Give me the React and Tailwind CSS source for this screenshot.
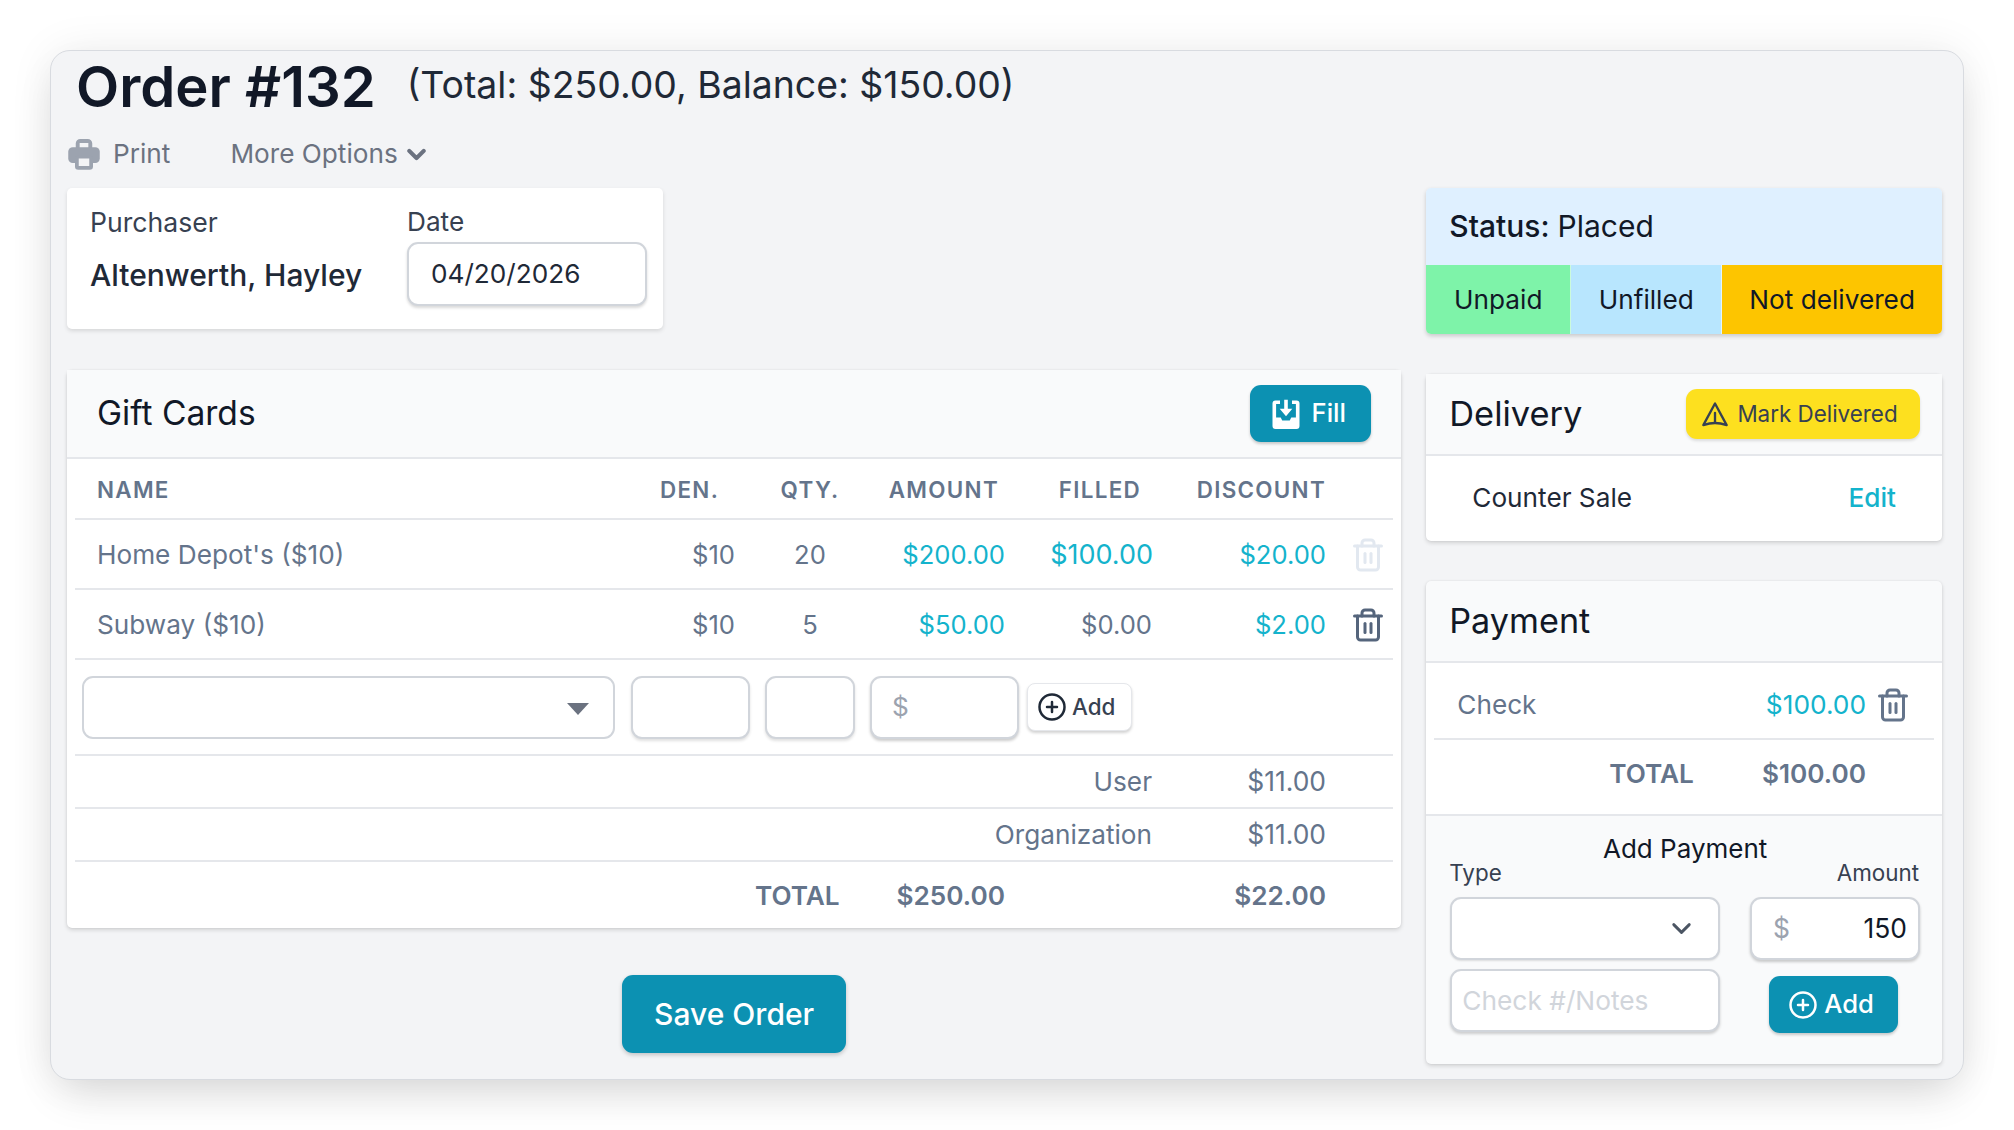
import React from 'react';
import { ChevronDown, CirclePlus, Trash2 } from 'lucide-react';

const PrinterIcon = ({ className }) => (
  <svg viewBox="0 0 24 24" className={className}>
    <path fill="#9ca3af" d="M6.500 9V5a3 3 0 0 1 3-3h5a3 3 0 0 1 3 3v4h-2.600V4.600H9.100V9z" />
    <rect fill="#9ca3af" x="1.500" y="7.500" width="21" height="10.500" rx="3" />
    <rect fill="#9ca3af" x="6" y="13" width="12" height="9.500" rx="2.200" />
    <rect fill="#f3f4f6" x="8.500" y="15" width="7" height="5" />
  </svg>
);

const FillIcon = ({ className }) => (
  <svg viewBox="0 0 24 24" className={className} fill="currentColor">
    <path d="M8 3H5a2 2 0 0 0-2 2v15a2 2 0 0 0 2 2h14a2 2 0 0 0 2-2V5a2 2 0 0 0-2-2h-3v2.400h2.600v9H15.500l-1 2h-5l-1-2H5.400v-9H8z" />
    <path d="M10.800 2.500h2.400v6h3l-4.200 5-4.200-5h3z" />
  </svg>
);

const WarnIcon = ({ className }) => (
  <svg viewBox="0 0 24 24" className={className} fill="none" stroke="currentColor" strokeWidth="2" strokeLinejoin="round" strokeLinecap="round">
    <path d="M12 3 2 21.500c3-1 6-1.800 10-1.800s7 .8 10 1.800z" />
    <path d="M12 11v8" />
  </svg>
);

const Field = ({ className = '', children }) => (
  <div className={`flex items-center rounded-[11px] border-2 border-[#d1d5db] bg-white ${className}`}>
    {children}
  </div>
);

const AddCircle = ({ className }) => <CirclePlus className={className} strokeWidth={2} />;

const rowBorder = 'border-b-2 border-[#e5e7eb]';
const teal = 'text-[#14b3cc]';
const num = 'text-[25.6px]';

const App = () => {
  return (
    <div className="min-h-screen bg-white p-[50px] font-['Inter',sans-serif]">
      <div className="h-[1030px] rounded-[20px] border border-[#d8dbe0] bg-[#f3f4f6] pl-4 pr-[21px] shadow-[0_20px_45px_-10px_rgba(0,0,0,0.14),0_0_45px_rgba(0,0,0,0.07)]">
        <div className="flex h-[62px] items-center pl-[9px] pt-[10px]">
          <h1 className="text-[56.200px] font-semibold leading-none text-[#111827]">Order #132</h1>
          <span className="ml-[31px] pb-[5px] text-[37.4px] leading-none text-[#1f2937]">(Total: $250.00, Balance: $150.00)</span>
        </div>

        <div className="mt-[12px] flex h-[58px] items-center text-[26.2px] text-[#6b7280]">
          <PrinterIcon className="-ml-[1px] h-[36px] w-[36px]" />
          <span className="ml-[11px]">Print</span>
          <span className="ml-[60px]">More Options</span>
          <ChevronDown className="ml-[4px] h-[29px] w-[29px]" strokeWidth={3.5} />
        </div>

        <div className="mt-[5px] flex gap-[25px]">
          {/* left column */}
          <div className="w-[1335px]">
            <div className="flex h-[141px] w-[596px] rounded-[5px] bg-white pl-[23px] pt-[18px] shadow-[0_2px_4px_rgba(0,0,0,0.12)]">
              <div className="w-[317px]">
                <div className="text-[26.6px] leading-[32px] text-[#374151]">Purchaser</div>
                <div className="mt-[18px] text-[30px] font-[450] leading-[38px] text-[#1f2937]">Altenwerth, Hayley</div>
              </div>
              <div>
                <div className="text-[26.2px] leading-[32px] text-[#374151]">Date</div>
                <div className="mt-[4px] flex h-[64px] w-[240px] items-center rounded-[11px] border-2 border-[#d1d5db] bg-white pl-[22px] text-[26.2px] text-[#1f2937] shadow-[0_2px_3px_rgba(0,0,0,0.15)]">
                  04/20/2026
                </div>
              </div>
            </div>

            <div className="mt-[41px] h-[558px] rounded-[5px] bg-white shadow-[0_2px_4px_rgba(0,0,0,0.14),0_0_2px_rgba(0,0,0,0.08)]">
              <div className="flex h-[89px] items-center justify-between border-b-2 border-[#e5e7eb] bg-[#f9fafb] pl-[30px] pr-[30px]">
                <h2 className="text-[33.6px] text-[#111827]">Gift Cards</h2>
                <button className="flex h-[57px] w-[121px] items-center justify-center gap-[8px] rounded-[11px] bg-[#0c91b2] pr-[8px] text-[25.6px] font-medium text-white shadow-[0_2px_3px_rgba(0,0,0,0.2)]">
                  <FillIcon className="h-[36px] w-[36px]" />
                  Fill
                </button>
              </div>

              <div className="px-2">
                <table className="w-full table-fixed border-collapse text-[26.2px] text-[#64748b]">
                  <colgroup>
                    <col className="w-[565px]" />
                    <col className="w-[115px]" />
                    <col className="w-[110px]" />
                    <col className="w-[155px]" />
                    <col className="w-[150px]" />
                    <col className="w-[171px]" />
                    <col />
                  </colgroup>
                  <thead>
                    <tr className={`h-[60px] ${rowBorder} text-[22.4px] tracking-[1.3px] [&>th]:pt-[2px]`}>
                      <th className="pl-[22px] text-left font-semibold">NAME</th>
                      <th className="pl-[20px] text-left font-semibold">DEN.</th>
                      <th className="text-center font-semibold">QTY.</th>
                      <th className="pr-[21px] text-right font-semibold">AMOUNT</th>
                      <th className="pr-[29px] text-right font-semibold">FILLED</th>
                      <th className="pr-[15px] text-right font-semibold">DISCOUNT</th>
                      <th />
                    </tr>
                  </thead>
                  <tbody>
                    <tr className={`h-[70px] ${rowBorder} [&>td]:pt-[2px]`}>
                      <td className="pl-[22px]">Home Depot's ($10)</td>
                      <td className={`pr-[20px] text-right ${num}`}>$10</td>
                      <td className={`text-center ${num}`}>20</td>
                      <td className={`pr-[15px] text-right ${num} ${teal}`}>$200.00</td>
                      <td className={`pr-[17px] text-right text-[27px] ${teal}`}>$100.00</td>
                      <td className={`pr-[15px] text-right ${num} ${teal}`}>$20.00</td>
                      <td className="pl-[2px]"><Trash2 className="mx-auto h-[36px] w-[36px] text-[#e2e8f0]" strokeWidth={2} /></td>
                    </tr>
                    <tr className={`h-[70px] ${rowBorder} [&>td]:pt-[2px]`}>
                      <td className="pl-[22px]">Subway ($10)</td>
                      <td className={`pr-[20px] text-right ${num}`}>$10</td>
                      <td className={`text-center ${num}`}>5</td>
                      <td className={`pr-[15px] text-right ${num} ${teal}`}>$50.00</td>
                      <td className={`pr-[18px] text-right ${num}`}>$0.00</td>
                      <td className={`pr-[15px] text-right ${num} ${teal}`}>$2.00</td>
                      <td className="pl-[2px]"><Trash2 className="mx-auto h-[36px] w-[36px] text-[#55657c]" strokeWidth={2} /></td>
                    </tr>
                    <tr className={`h-[96px] ${rowBorder}`}>
                      <td colSpan={7} className="px-[7px]">
                        <div className="flex items-center">
                          <Field className="h-[63px] w-[533px] justify-end pr-[24px] pt-[3px]">
                            <span className="h-0 w-0 border-x-[11px] border-t-[12px] border-x-transparent border-t-[#6b7280]" />
                          </Field>
                          <Field className="ml-[16px] h-[63px] w-[119px] shadow-[0_2px_3px_rgba(0,0,0,0.12)]" />
                          <Field className="ml-[15px] h-[63px] w-[90px] shadow-[0_2px_3px_rgba(0,0,0,0.12)]" />
                          <Field className="ml-[15px] h-[63px] w-[149px] pl-[20px] text-[#9ca3af] shadow-[0_2px_3px_rgba(0,0,0,0.2)]">$</Field>
                          <button className="ml-[8px] flex h-[48px] w-[105px] items-center gap-[5px] rounded-[8px] border border-[#e5e7eb] bg-white pl-[9px] text-[22.4px] font-medium text-[#374151] shadow-[0_2px_3px_rgba(0,0,0,0.18)]">
                            <AddCircle className="h-[30px] w-[30px] text-[#1f2937]" />
                            Add
                          </button>
                        </div>
                      </td>
                    </tr>
                    <tr className={`h-[53px] ${rowBorder}`}>
                      <td colSpan={5} className="pr-[18px] text-right">User</td>
                      <td className="pr-[15px] text-right text-[26.4px]">$11.00</td>
                      <td />
                    </tr>
                    <tr className={`h-[53px] ${rowBorder}`}>
                      <td colSpan={5} className="pr-[18px] text-right">Organization</td>
                      <td className="pr-[15px] text-right text-[26.4px]">$11.00</td>
                      <td />
                    </tr>
                    <tr className="h-[66px] font-semibold [&>td]:pt-[2px]">
                      <td colSpan={2} />
                      <td className="pr-[26px] text-right">TOTAL</td>
                      <td className="pr-[15px] text-right">$250.00</td>
                      <td />
                      <td className="pr-[15px] text-right">$22.00</td>
                      <td />
                    </tr>
                  </tbody>
                </table>
              </div>
            </div>

            <div className="mt-[47px] flex justify-center">
              <button className="h-[78px] w-[224px] rounded-[11px] bg-[#0c91b2] text-[30px] font-medium text-white shadow-[0_2px_4px_rgba(0,0,0,0.2)]">
                Save Order
              </button>
            </div>
          </div>

          {/* right column */}
          <div className="flex w-[516px] flex-col gap-[40px]">
            <div className="h-[146px] overflow-hidden rounded-[5px] shadow-[0_2px_4px_rgba(0,0,0,0.18)]">
              <div className="flex h-[77px] items-center bg-[#dff0ff] pl-[23px] text-[30px] text-[#111827]">
                <span className="font-medium">Status:</span>
                <span className="ml-[8px]">Placed</span>
              </div>
              <div className="flex h-[69px] text-[26.2px] text-[#111827]">
                <div className="flex w-[145px] items-center justify-center border-r border-white/60 bg-[#7ef3a9]">Unpaid</div>
                <div className="flex w-[151px] items-center justify-center border-r border-white/60 bg-[#b8e6fe]">Unfilled</div>
                <div className="flex flex-1 items-center justify-center bg-[#fdc500]">Not delivered</div>
              </div>
            </div>

            <div className="h-[167px] rounded-[5px] bg-white shadow-[0_2px_4px_rgba(0,0,0,0.14),0_0_2px_rgba(0,0,0,0.08)]">
              <div className="flex h-[82px] items-center justify-between border-b-2 border-[#e5e7eb] bg-[#f9fafb] pl-[23px] pr-[22px]">
                <h2 className="text-[34.4px] text-[#111827]">Delivery</h2>
                <button className="flex h-[50px] w-[234px] items-center justify-center gap-[8px] rounded-[11px] bg-[#fde01f] pr-[7px] text-[22.4px] text-[#374151] shadow-[0_2px_3px_rgba(0,0,0,0.12)]">
                  <WarnIcon className="h-[28px] w-[28px]" />
                  Mark Delivered
                </button>
              </div>
              <div className="flex h-[83px] items-center justify-between pl-[46px] pr-[46px] text-[26.2px] text-[#1f2937]">
                <span>Counter Sale</span>
                <span className={`font-medium ${teal}`}>Edit</span>
              </div>
            </div>

            <div className="h-[483px] rounded-[5px] bg-[#f9fafb] shadow-[0_2px_4px_rgba(0,0,0,0.14),0_0_2px_rgba(0,0,0,0.08)]">
              <div className="flex h-[82px] items-center border-b-2 border-[#e5e7eb] pl-[23px]">
                <h2 className="text-[34.2px] text-[#111827]">Payment</h2>
              </div>
              <div className="h-[153px] border-b-2 border-[#e5e7eb] bg-white px-2 text-[26.2px] text-[#64748b]">
                <div className={`flex h-[77px] items-center ${rowBorder} pl-[23px] pr-[23px] pt-[9px]`}>
                  <span>Check</span>
                  <span className="ml-auto text-[26.3px] text-[#14b3cc]">$100.00</span>
                  <Trash2 className="ml-[9px] h-[36px] w-[36px] text-[#64748b]" strokeWidth={2} />
                </div>
                <div className="flex h-[68px] items-center font-semibold">
                  <span className="ml-[175px]">TOTAL</span>
                  <span className="ml-[68px]">$100.00</span>
                </div>
              </div>
              <div className="relative pl-[24px] pr-[22px] pt-[17px]">
                <div className="text-center text-[26px] leading-[32px] text-[#111827]">Add Payment</div>
                <div className="mt-[-7px] flex justify-between pr-[1px] text-[22.4px] leading-[30px] text-[#374151]">
                  <span className="-ml-[1px]">Type</span>
                  <span>Amount</span>
                </div>
                <div className="mt-[9px] flex justify-between">
                  <div className="w-[270px]">
                    <Field className="h-[63px] justify-end pr-[21px] shadow-[0_1px_2px_rgba(0,0,0,0.12)]">
                      <ChevronDown className="h-[31px] w-[31px] text-[#4b5563]" strokeWidth={2.2} />
                    </Field>
                    <Field className="mt-[9px] h-[63px] pl-[10px] text-[26.3px] text-[#d1d5db] shadow-[0_2px_3px_rgba(0,0,0,0.18)]">Check #/Notes</Field>
                  </div>
                  <div className="w-[170px]">
                    <Field className="h-[63px] justify-between pl-[21px] pr-[11px] text-[26.4px] shadow-[0_2px_3px_rgba(0,0,0,0.2)]">
                      <span className="text-[#9ca3af]">$</span>
                      <span className="text-[#111827]">150</span>
                    </Field>
                    <button className="ml-[19px] mt-[16px] flex h-[57px] w-[129px] items-center justify-center gap-[6px] rounded-[11px] bg-[#0c91b2] pr-[5px] text-[25.6px] font-medium text-white shadow-[0_2px_3px_rgba(0,0,0,0.2)]">
                      <AddCircle className="h-[30px] w-[30px]" />
                      Add
                    </button>
                  </div>
                </div>
              </div>
            </div>
          </div>
        </div>
      </div>
    </div>
  );
};

export default App;
